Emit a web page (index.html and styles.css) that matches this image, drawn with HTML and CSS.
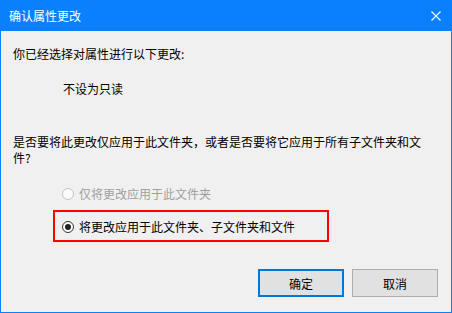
FILE: index.html
```html
<!DOCTYPE html>
<html lang="zh-CN">
<head>
<meta charset="utf-8">
<title>确认属性更改</title>
<link rel="stylesheet" href="styles.css">
</head>
<body>
<div class="window">
  <div class="titlebar">
    <span class="title">确认属性更改</span>
    <svg class="close" width="10" height="10" viewBox="0 0 10 10"><path d="M0.5 0.5 L9.5 9.5 M9.5 0.5 L0.5 9.5" stroke="#fff" stroke-width="1.1" fill="none"/></svg>
  </div>
  <div class="content">
    <p class="line intro">你已经选择对属性进行以下更改:</p>
    <p class="line change">不设为只读</p>
    <p class="line question">是否要将此更改仅应用于此文件夹，或者是否要将它应用于所有子文件夹和文件?</p>
    <div class="options">
      <div class="option disabled"><span class="radio"></span><span>仅将更改应用于此文件夹</span></div>
      <div class="option-box">
        <div class="option"><span class="radio checked"></span><span>将更改应用于此文件夹、子文件夹和文件</span></div>
      </div>
    </div>
  </div>
  <div class="buttons">
    <button class="btn default">确定</button>
    <button class="btn">取消</button>
  </div>
</div>
</body>
</html>
```
FILE: styles.css
```css
* { box-sizing: border-box; }
html, body { margin: 0; padding: 0; }
body {
  font-family: "Noto Sans CJK SC", "Noto Sans", sans-serif;
  font-size: 12px;
  color: #000;
  background: #f0f0f0;
}
.window {
  width: 452px;
  height: 313px;
  border: 1px solid #0a80fe;
  border-top: none;
  background: #f0f0f0;
  display: flex;
  flex-direction: column;
}
.titlebar {
  height: 31px;
  background: #0a80fe;
  color: #fff;
  display: flex;
  align-items: center;
  justify-content: space-between;
  padding: 0 10px 0 8px;
  flex-shrink: 0;
}
.title { line-height: 16px; padding-top: 0; }
.close { display: block; margin-top: 0; }
.content {
  padding: 15px 0 0 12px;
}
.line {
  margin: 0;
  line-height: 16px;
}
.change {
  margin-top: 19px;
  padding-left: 50px;
}
.question {
  margin-top: 37px;
  width: 416px;
}
.options {
  margin-top: 20px;
  padding-left: 40px;
}
.option {
  display: flex;
  align-items: center;
  height: 16px;
  line-height: 16px;
  gap: 5px;
}
.options > .option { padding-left: 9px; }
.option.disabled { color: #a0a0a0; }
.radio {
  width: 12px;
  height: 12px;
  border-radius: 50%;
  border: 1px solid #333;
  background: #fff;
  display: flex;
  align-items: center;
  justify-content: center;
  flex-shrink: 0;
}
.disabled .radio { border-color: #c4c4c4; background: #fbfbfb; }
.radio.checked::after {
  content: "";
  width: 6px;
  height: 6px;
  border-radius: 50%;
  background: #222;
}
.option-box {
  margin-top: 8px;
  width: 276px;
  height: 32px;
  border: 2px solid #f00;
  display: flex;
  align-items: center;
  padding-left: 7px;
  padding-top: 1px;
}
.buttons {
  margin-top: 27px;
  display: flex;
  justify-content: flex-end;
  gap: 8px;
  padding-right: 13px;
}
.btn {
  width: 86px;
  height: 28px;
  background: #e1e1e1;
  border: 1px solid #adadad;
  font-family: "Noto Sans CJK SC", "Noto Sans", sans-serif;
  font-size: 12px;
  color: #000;
  padding: 0;
  margin: 0;
}
.btn.default { border: 2px solid #0078d7; }
```
